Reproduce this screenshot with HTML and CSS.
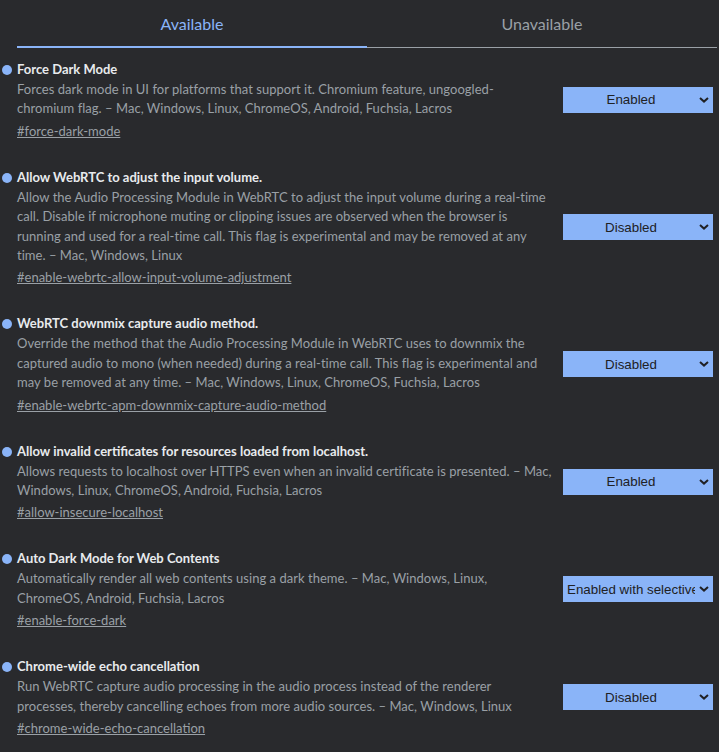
FILE: index.html
```html
<!DOCTYPE html>
<html lang="en">
<head>
<meta charset="utf-8">
<title>Experiments</title>
<link rel="stylesheet" href="styles.css">
</head>
<body>
<div class="tabs">
  <div class="tab active">Available</div>
  <div class="tab">Unavailable</div>
</div>
<div class="list">
  <div class="experiment">
    <div class="info">
      <div class="title">Force Dark Mode</div>
      <p class="desc">Forces dark mode in UI for platforms that support it. Chromium feature, ungoogled-<br>chromium flag. – Mac, Windows, Linux, ChromeOS, Android, Fuchsia, Lacros</p>
      <a class="link" href="#force-dark-mode">#force-dark-mode</a>
    </div>
    <div class="action">
      <select class="choice"><option>Enabled</option></select>
      <svg class="chev" width="10" height="6" viewBox="0 0 10 6"><path d="M1 1 L5 4.6 L9 1" fill="none" stroke="#202124" stroke-width="2"/></svg>
    </div>
  </div>
  <div class="experiment">
    <div class="info">
      <div class="title">Allow WebRTC to adjust the input volume.</div>
      <p class="desc">Allow the Audio Processing Module in WebRTC to adjust the input volume during a real-time<br>call. Disable if microphone muting or clipping issues are observed when the browser is<br>running and used for a real-time call. This flag is experimental and may be removed at any<br>time. – Mac, Windows, Linux</p>
      <a class="link" href="#enable-webrtc-allow-input-volume-adjustment">#enable-webrtc-allow-input-volume-adjustment</a>
    </div>
    <div class="action">
      <select class="choice"><option>Disabled</option></select>
      <svg class="chev" width="10" height="6" viewBox="0 0 10 6"><path d="M1 1 L5 4.6 L9 1" fill="none" stroke="#202124" stroke-width="2"/></svg>
    </div>
  </div>
  <div class="experiment">
    <div class="info">
      <div class="title">WebRTC downmix capture audio method.</div>
      <p class="desc">Override the method that the Audio Processing Module in WebRTC uses to downmix the<br>captured audio to mono (when needed) during a real-time call. This flag is experimental and<br>may be removed at any time. – Mac, Windows, Linux, ChromeOS, Fuchsia, Lacros</p>
      <a class="link" href="#enable-webrtc-apm-downmix-capture-audio-method">#enable-webrtc-apm-downmix-capture-audio-method</a>
    </div>
    <div class="action">
      <select class="choice"><option>Disabled</option></select>
      <svg class="chev" width="10" height="6" viewBox="0 0 10 6"><path d="M1 1 L5 4.6 L9 1" fill="none" stroke="#202124" stroke-width="2"/></svg>
    </div>
  </div>
  <div class="experiment">
    <div class="info">
      <div class="title">Allow invalid certificates for resources loaded from localhost.</div>
      <p class="desc">Allows requests to localhost over HTTPS even when an invalid certificate is presented. – Mac,<br>Windows, Linux, ChromeOS, Android, Fuchsia, Lacros</p>
      <a class="link" href="#allow-insecure-localhost">#allow-insecure-localhost</a>
    </div>
    <div class="action">
      <select class="choice"><option>Enabled</option></select>
      <svg class="chev" width="10" height="6" viewBox="0 0 10 6"><path d="M1 1 L5 4.6 L9 1" fill="none" stroke="#202124" stroke-width="2"/></svg>
    </div>
  </div>
  <div class="experiment">
    <div class="info">
      <div class="title">Auto Dark Mode for Web Contents</div>
      <p class="desc">Automatically render all web contents using a dark theme. – Mac, Windows, Linux,<br>ChromeOS, Android, Fuchsia, Lacros</p>
      <a class="link" href="#enable-force-dark">#enable-force-dark</a>
    </div>
    <div class="action">
      <select class="choice left"><option>Enabled with selective image inversion</option></select>
      <svg class="chev" width="10" height="6" viewBox="0 0 10 6"><path d="M1 1 L5 4.6 L9 1" fill="none" stroke="#202124" stroke-width="2"/></svg>
    </div>
  </div>
  <div class="experiment">
    <div class="info">
      <div class="title">Chrome-wide echo cancellation</div>
      <p class="desc">Run WebRTC capture audio processing in the audio process instead of the renderer<br>processes, thereby cancelling echoes from more audio sources. – Mac, Windows, Linux</p>
      <a class="link" href="#chrome-wide-echo-cancellation">#chrome-wide-echo-cancellation</a>
    </div>
    <div class="action">
      <select class="choice"><option>Disabled</option></select>
      <svg class="chev" width="10" height="6" viewBox="0 0 10 6"><path d="M1 1 L5 4.6 L9 1" fill="none" stroke="#202124" stroke-width="2"/></svg>
    </div>
  </div>
</div>
</body>
</html>
```
FILE: styles.css
```css
html, body {
  margin: 0;
  padding: 0;
  background: #292a2d;
}
body {
  font-family: Lato, "Noto Sans", sans-serif;
  color: #9aa0a6;
  overflow: hidden;
}
.tabs {
  display: flex;
  margin: 0 2px 0 17px;
  border-bottom: 1px solid #9aa0a6;
}
.tab {
  flex: 1;
  text-align: center;
  font-size: 16px;
  line-height: 20px;
  padding: 14px 0 12px;
  color: #9aa0a6;
  border-bottom: 2px solid transparent;
  margin-bottom: -1px;
}
.tab.active {
  color: #8ab4f8;
  border-bottom-color: #8ab4f8;
}
.list {
  display: flex;
  flex-direction: column;
  gap: 26px;
  padding: 11px 6px 0 17px;
}
.experiment {
  display: flex;
  align-items: center;
  gap: 8px;
}
.info {
  flex: 1;
  min-width: 0;
}
.title {
  font-size: 13px;
  font-weight: bold;
  line-height: 20px;
  color: #e8eaed;
  margin-bottom: 1px;
}
.title::before {
  content: "";
  display: inline-block;
  width: 10px;
  height: 10px;
  border-radius: 50%;
  background: #8ab4f8;
  margin-left: -15px;
  margin-right: 5px;
  vertical-align: -1px;
}
.desc {
  margin: 0;
  font-size: 13px;
  line-height: 19.4px;
  letter-spacing: 0.03px;
}
.link {
  display: inline-block;
  margin-top: 2px;
  font-size: 13px;
  line-height: 20px;
  color: #9aa0a6;
  text-decoration: underline;
}
.action {
  position: relative;
  flex: none;
  width: 150px;
  height: 26px;
}
.choice {
  appearance: none;
  -webkit-appearance: none;
  width: 150px;
  height: 26px;
  border: none;
  border-radius: 0;
  margin: 0;
  padding: 0 18px 0 4px;
  background: #8ab4f8;
  color: #202124;
  font-family: "Liberation Sans", Arial, sans-serif;
  font-size: 13.33px;
  text-align: center;
  text-align-last: center;
}
.choice.left {
  text-align: left;
  text-align-last: left;
}
.chev {
  position: absolute;
  right: 4px;
  top: 10px;
  pointer-events: none;
}
```
